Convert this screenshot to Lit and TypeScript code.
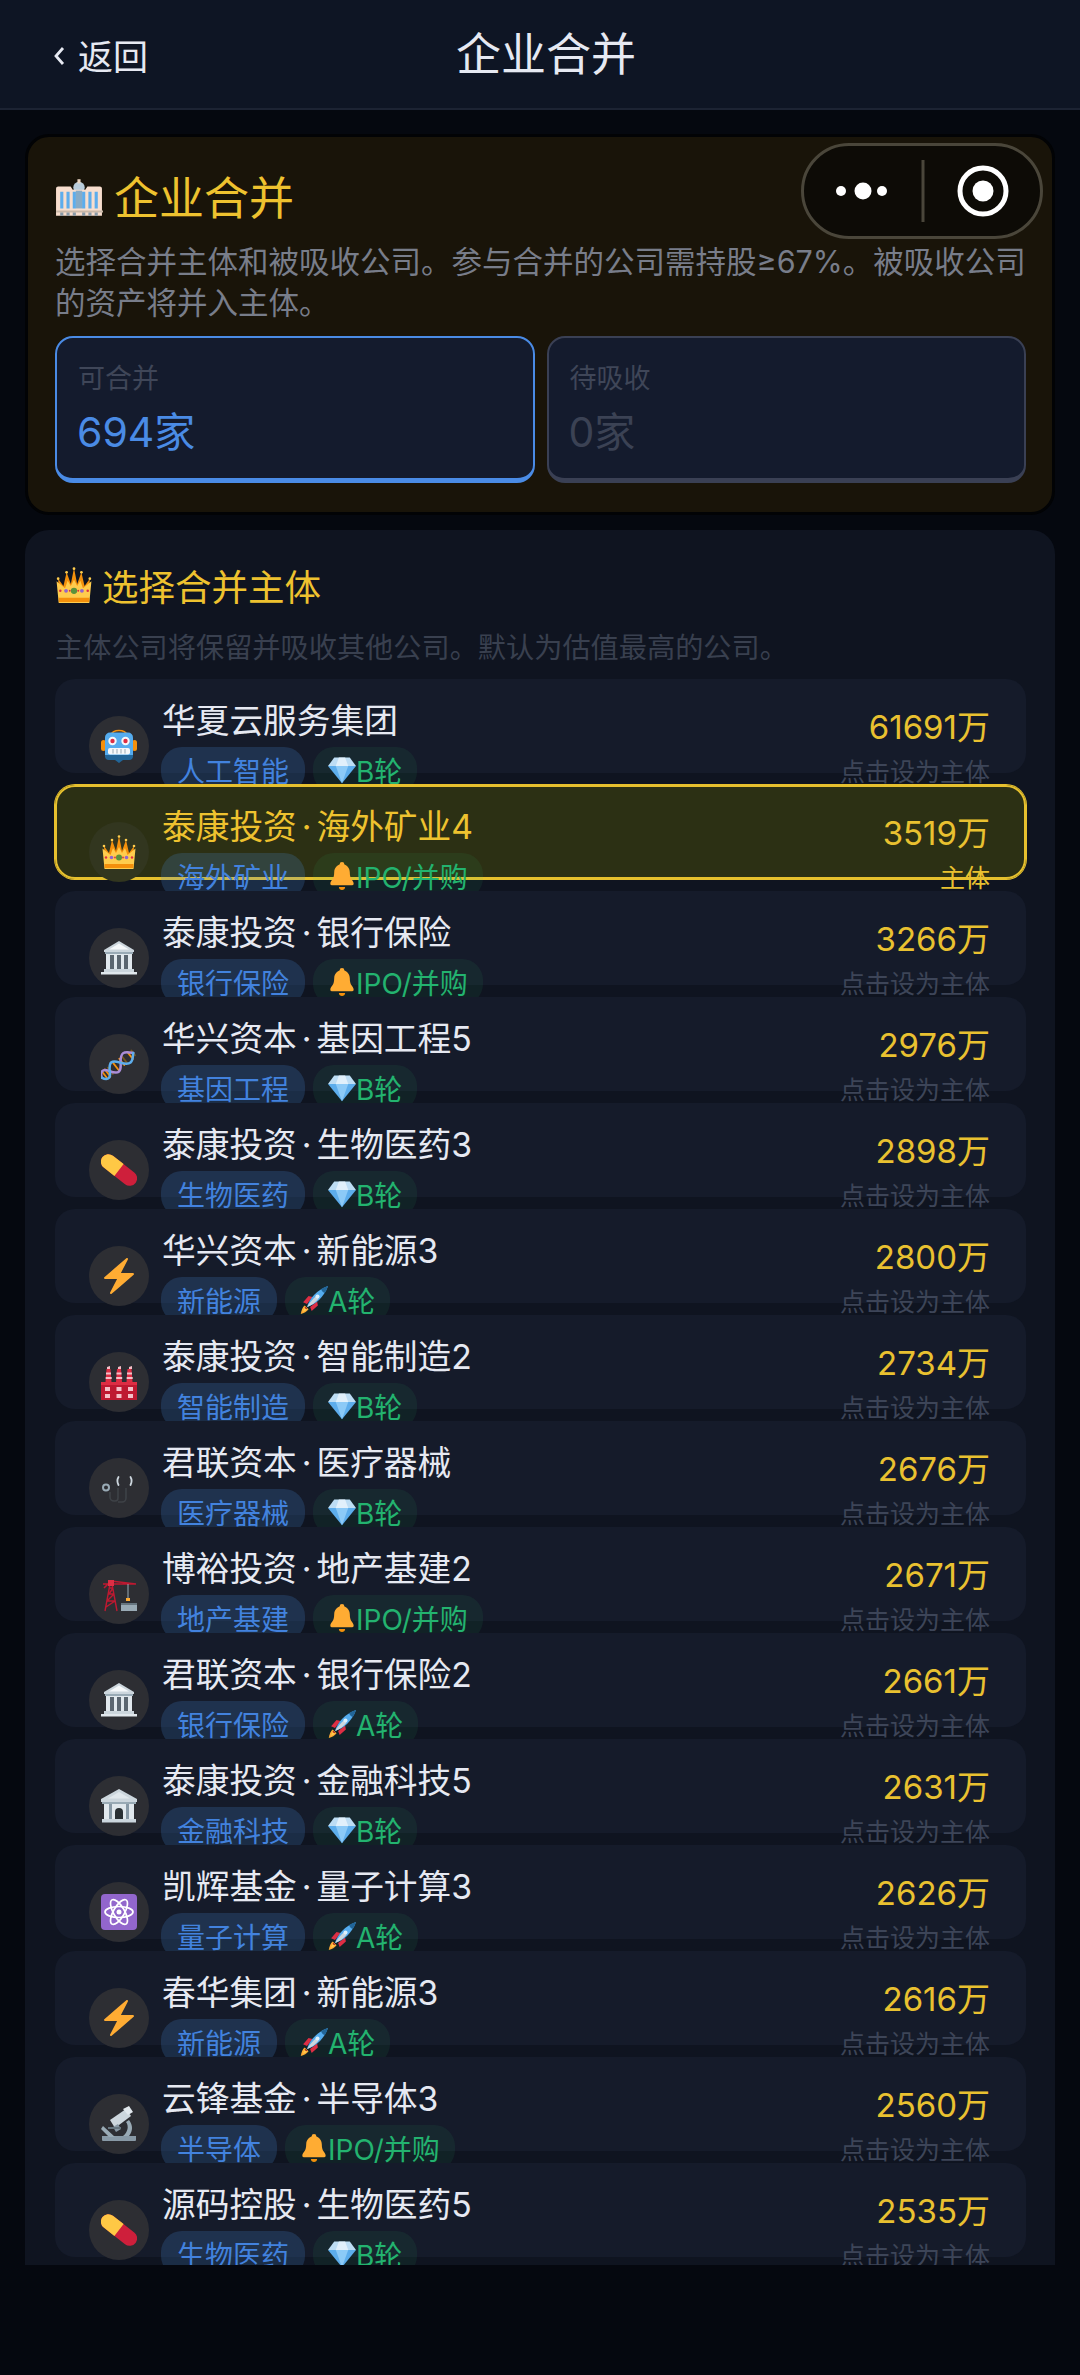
import { LitElement, html, css, svg } from "lit";
import { customElement } from "lit/decorators.js";

const ICONS: Record<string, unknown> = {
  crown: svg`<path fill="#F4900C" d="M3 12l5 7 3-13 4 11 3-15 3 15 4-11 3 13 5-7-1 17H4z"/><path fill="#FFCC4D" d="M1.5 14.5l8 6.5 2.5-7 3 5 3-6 3 6 3-5 2.500 7 8-6.500-2 20.500H3.500z"/><path fill="#F4900C" d="M3.500 30h29l-.2 4h-28.600z"/><circle cx="18" cy="23.500" r="3" fill="#5C913B"/><circle cx="10.500" cy="23.500" r="1.800" fill="#9266CC"/><circle cx="25.500" cy="23.500" r="1.800" fill="#9266CC"/><circle cx="5" cy="23.500" r="1.200" fill="#DD2E44"/><circle cx="31" cy="23.500" r="1.200" fill="#DD2E44"/><circle cx="14" cy="23.500" r=".9" fill="#DD2E44"/><circle cx="22" cy="23.500" r=".9" fill="#DD2E44"/><circle cx="3" cy="12" r="1.300" fill="#FFCC4D"/><circle cx="33" cy="12" r="1.300" fill="#FFCC4D"/><circle cx="18" cy="2.500" r="1.300" fill="#FFCC4D"/><circle cx="11" cy="6" r="1.300" fill="#FFCC4D"/><circle cx="25" cy="6" r="1.300" fill="#FFCC4D"/>`,
  robot: svg`<path fill="none" stroke="#F4900C" stroke-width="1.600" d="M10 7c1-3 4-4.500 8-4.500S25 4 26 7"/><rect x="0" y="12" width="5" height="11" rx="2.500" fill="#F4900C"/><rect x="31" y="12" width="5" height="11" rx="2.500" fill="#F4900C"/><rect x="4" y="4.500" width="28" height="27" rx="5" fill="#55ACEE"/><path fill="#269" d="M4 27h28v1a4 4 0 01-4 4h-6l-4 3-4-3H8a4 4 0 01-4-4z"/><circle cx="11.500" cy="13" r="4.200" fill="#F5F8FA"/><circle cx="24.500" cy="13" r="4.200" fill="#F5F8FA"/><circle cx="11.500" cy="13" r="2.200" fill="#DD2E44"/><circle cx="24.500" cy="13" r="2.200" fill="#DD2E44"/><rect x="7" y="20" width="22" height="6.500" rx="2" fill="#F5F8FA"/><path stroke="#99AAB5" stroke-width="1" d="M12 21v4.500M16 21v4.500M20 21v4.500M24 21v4.500"/>`,
  classical: svg`<path fill="#CCD6DD" d="M18 1L3 10v2h30v-2z"/><path fill="#F5F8FA" d="M18 3.500L8 9.500h20z"/><path fill="#99AAB5" d="M4 12h28v2H4z"/><path fill="#E1E8ED" d="M5 14h26v15H5z"/><path fill="#5B6670" d="M9 15h4v14H9zM16 15h4v14h-4zM23 15h4v14h-4z"/><path fill="#CCD6DD" d="M3 29h30v3H3z"/><path fill="#E1E8ED" d="M0 32h36v2.500H0z"/>`,
  bank: svg`<path fill="#CCD6DD" d="M18 1L0 11v3h36v-3z"/><path fill="#E1E8ED" d="M18 4L7 10.500h22z"/><path fill="#99AAB5" d="M1 14h34v2H1z"/><path fill="#E1E8ED" d="M3 16h30v15H3z"/><path fill="#8899A6" d="M8 16h3v15H8zM25 16h3v15h-3z"/><path fill="#292F33" d="M14 31v-7a4 4 0 018 0v7z"/><path fill="#CCD6DD" d="M1 31h34v3.500H1z"/>`,
  dna: svg`<g transform="rotate(-38 18 18)" fill="none" stroke-linecap="round"><path stroke-width="1.800" stroke="#F4900C" d="M0 15v6M3.500 13.500v9M14 13.500v9M21.500 14v8M32 13.500v9"/><path stroke-width="1.800" stroke="#77581B" d="M7 14v8M25 14v8M36 15v6"/><path stroke="#AA8DD8" stroke-width="2.500" d="M-4 18c2.500-6 6.500-6 9-2s4.500 8 8 8 5.500-4 7-6 5-6 8-6 4.500 2 8 6"/><path stroke="#5DADEC" stroke-width="2.500" d="M-4 18c2.500 6 6.500 6 9 2s4.500-8 8-8 5.500 4 7 6 5 6 8 6 4.500-2 8-6"/></g>`,
  pill: svg`<g transform="rotate(38 18 18)"><rect x="-3" y="10.500" width="42" height="15" rx="7.500" fill="#CE1F3B"/><path fill="#FFC845" d="M18 10.500H4.500a7.500 7.500 0 000 15H18z"/></g>`,
  bolt: svg`<path fill="#FFAC33" d="M32.938 15.651C32.792 15.26 32.418 15 32 15H19.925L26.89 1.458c.219-.426.106-.947-.271-1.243C26.437.071 26.218 0 26 0c-.233 0-.466.082-.653.243L18 6.588 3.347 19.243c-.316.273-.43.714-.284 1.105S3.582 21 4 21h12.075L9.110 34.542c-.219.426-.106.947.271 1.243.182.144.401.215.619.215.233 0 .466-.082.653-.243L18 29.412l14.653-12.655c.317-.273.43-.714.285-1.106z"/>`,
  factory: svg`<path fill="#BE1931" d="M0 20h36v16H0z"/><path fill="#DD2E44" d="M0 18h36v3H0z"/><path fill="#F5C0C8" d="M6 3l3-1v3H6zM17 3l3-1v3h-3zM28 3l3-1v3h-3z"/><path fill="#DD2E44" d="M5.500 5h4l1 13h-6zM16 5h4l1 13h-6zM26.500 5h4l1 13h-6z"/><path fill="#F5C0C8" d="M5 8.500h5v2H5zM4.700 13h6v2h-6zM15.500 8.500h5v2h-5zM15.200 13h6v2h-6zM26 8.500h5v2h-5zM25.700 13h6v2h-6z"/><path fill="#F5C0C8" d="M4 23h5v4H4zM15.500 23h5v4h-5zM27 23h5v4h-5zM4 30h5v4H4zM15.500 30h5v4h-5zM27 30h5v4h-5z"/>`,
  stethoscope: svg`<circle cx="5" cy="17.500" r="3" fill="none" stroke="#99AAB5" stroke-width="2"/><path fill="none" stroke="#3E4247" stroke-width="1.600" d="M17 18v10a3 3 0 01-3 3h-1a4 4 0 01-4-4v-5M25 18v10a4 4 0 01-4 4h-4"/><path fill="none" stroke="#CCD6DD" stroke-width="1.800" stroke-linecap="round" d="M17.500 7c-1.500 2.500-1.500 5 0 8M29.500 7c1.500 2.500 1.500 5 0 8"/>`,
  crane: svg`<path fill="none" stroke="#BE1931" stroke-width="1.400" d="M9 8L4 35M11 8l5 27M6 25h8M7 18h6M8 12h4M5 31l9-6M6 25l7-7M12 12l-4 6"/><path fill="none" stroke="#BE1931" stroke-width="1.600" d="M2 8h33M3 12l7-7 25 3"/><path fill="#DD2E44" d="M7 4h6v6H7z"/><path stroke="#99AAB5" stroke-width="1" d="M27 8v16"/><path fill="#FFAC33" d="M25 22h4v3h-4z"/><path fill="#99AAB5" d="M20 27h16v8H20z"/><path fill="#66757F" d="M20 27h16v2H20z"/>`,
  atom: svg`<rect width="36" height="36" rx="4" fill="#9266CC"/><g fill="none" stroke="#fff" stroke-width="1.700"><ellipse cx="18" cy="18" rx="14" ry="5.500"/><ellipse cx="18" cy="18" rx="14" ry="5.500" transform="rotate(60 18 18)"/><ellipse cx="18" cy="18" rx="14" ry="5.500" transform="rotate(120 18 18)"/></g><circle cx="18" cy="18" r="2.500" fill="#fff"/>`,
  microscope: svg`<path fill="#8899A6" d="M1 30h34v4a1 1 0 01-1 1H2a1 1 0 01-1-1z"/><path fill="#99AAB5" d="M2 20l12 11h-6L0 23zM28 14c4 5 4 11 0 16h-6c5-4 6-10 3-14z"/><path fill="#CCD6DD" d="M9 14L25 3l5 7-16 12z"/><path fill="#E1E8ED" d="M22 3l6-3 4 6-5 3z"/><path fill="#8899A6" d="M12 21l5-3 3 5-5 3z"/><path fill="#66757F" d="M7 21h13v2H7z"/>`,
  gem: svg`<path fill="#BDDDF4" d="M8 2h20l8 11H0z"/><path fill="#5DADEC" d="M0 13h36L18 35z"/><path fill="#8CCAF7" d="M10 13h16L18 35z"/><path fill="#E1F0FB" d="M10 13L14 2h8l4 11z"/>`,
  bell: svg`<path fill="#FFAC33" d="M28 13c0 11 5 10 5 15 0 0 0 2-2 2H5c-2 0-2-2-2-2 0-5 5-4 5-15C8 7.478 12.477 3 18 3s10 4.478 10 10z"/><circle cx="18" cy="3" r="3" fill="#FFAC33"/><path fill="#F4900C" d="M18 36c2.209 0 4-1.791 4-4h-8c0 2.209 1.791 4 4 4z"/>`,
  rocket: svg`<path fill="#FFAC33" d="M1 36c1-5 2-9 5-11l5 5c-2 3-6 5-10 6z"/><path fill="#FFCC4D" d="M4 33c.500-2 1-4 3-5l2 2c-1 2-3 2.500-5 3z"/><path fill="#DD2E44" d="M4 21l7-8 5 1-7 9zM15 32l8-7-1-5-9 7z"/><path fill="#A0041E" d="M7 27l2 2-1 1-2-2z"/><path fill="#55ACEE" d="M9 27C12 16 22 5 36 0c-5 14-16 24-27 27z"/><path fill="#CCD6DD" d="M9 27c3-5 7-10 12-14 1 2 2 3 3 3-4 5-9 9-15 11z"/><path fill="#269" d="M36 0c-4 1-7 3-9 4 1 3 3 5 5 5 2-3 3-6 4-9z"/><circle cx="22.500" cy="13.500" r="2.600" fill="#DCF0FC"/>`,
  tower: svg`<circle cx="23" cy="8" r="5.500" fill="#B9CDDB"/><path fill="#E8D4C0" d="M21.500 0h3v4h-3z"/><path fill="#F7DECE" d="M1 9a2 2 0 012-2h12l2 3h12l2-3h12a2 2 0 012 2v26H1z"/><path fill="#5DADEC" d="M5 12h3v16H5zM11 12h3v16h-3zM17 12h3v16h-3zM26 12h3v16h-3zM32 12h3v16h-3zM38 12h3v16h-3z"/><path fill="#3B88C3" d="M20 11h6v17h-6z" opacity=".6"/><path fill="#C9B8A8" d="M1 30h45v2H1z"/><path fill="#8899A6" d="M5 32h3v3H5zM11 32h3v3h-3zM17 32h3v3h-3zM26 32h3v3h-3zM32 32h3v3h-3zM38 32h3v3h-3z"/>`,
};

const icon = (name: string, cls: string, box = "0 0 36 36") =>
  html`<svg class=${cls} viewBox=${box} aria-hidden="true">${ICONS[name]}</svg>`;

type Round = "A" | "B" | "I";
const ROUND: Record<Round, [string, string]> = {
  A: ["rocket", "A轮"],
  B: ["gem", "B轮"],
  I: ["bell", "IPO/并购"],
};

const ROWS: [string, string, Round, string, string][] = [
  ["华夏云服务集团", "人工智能", "B", "61691万", "robot"],
  ["泰康投资·海外矿业4", "海外矿业", "I", "3519万", "crown"],
  ["泰康投资·银行保险", "银行保险", "I", "3266万", "classical"],
  ["华兴资本·基因工程5", "基因工程", "B", "2976万", "dna"],
  ["泰康投资·生物医药3", "生物医药", "B", "2898万", "pill"],
  ["华兴资本·新能源3", "新能源", "A", "2800万", "bolt"],
  ["泰康投资·智能制造2", "智能制造", "B", "2734万", "factory"],
  ["君联资本·医疗器械", "医疗器械", "B", "2676万", "stethoscope"],
  ["博裕投资·地产基建2", "地产基建", "I", "2671万", "crane"],
  ["君联资本·银行保险2", "银行保险", "A", "2661万", "classical"],
  ["泰康投资·金融科技5", "金融科技", "B", "2631万", "bank"],
  ["凯辉基金·量子计算3", "量子计算", "A", "2626万", "atom"],
  ["春华集团·新能源3", "新能源", "A", "2616万", "bolt"],
  ["云锋基金·半导体3", "半导体", "I", "2560万", "microscope"],
  ["源码控股·生物医药5", "生物医药", "B", "2535万", "pill"],
];

@customElement("app-root")
export class AppRoot extends LitElement {
  static styles = css`
    :host {
      display: block;
      width: 1080px;
      height: 2375px;
      overflow: hidden;
      background: #05080f;
      font-family: Inter, "Noto Sans CJK SC", sans-serif;
      color: #e6e9f2;
    }
    .nav {
      box-sizing: border-box;
      height: 110px;
      padding: 0 40px 0 52px;
      display: grid;
      grid-template-columns: 1fr auto 1fr;
      align-items: center;
      background: #0e1524;
      border-bottom: 2px solid #1c2333;
    }
    .back { display: flex; align-items: center; gap: 12px; font-size: 35px; }
    .chev { width: 14px; height: 22px; margin-top: 4px; fill: none; stroke: #e6e9f2; stroke-width: 2.800; }
    .nav-title { font-size: 45px; line-height: 60px; margin-top: 2px; }
    .scroll {
      height: 2155px;
      overflow: hidden;
      padding: 24px 25px 0;
      box-sizing: border-box;
    }
    .hero {
      position: relative;
      box-sizing: border-box;
      height: 381px;
      border: 3px solid #020305;
      border-radius: 24px;
      background: #191409;
      padding: 28px 26px 0 27px;
    }
    .capsule {
      position: absolute;
      top: 6px;
      right: 9px;
      box-sizing: border-box;
      width: 242px;
      height: 96px;
      border: 3px solid #4a463a;
      border-radius: 48px;
      background: #0d0b06;
      display: flex;
      align-items: center;
    }
    .cap-svg { display: block; width: 236px; height: 90px; }
    .hero-title { display: flex; align-items: center; gap: 11px; height: 60px; font-size: 45px; color: #eec22f; }
    .ic-tower { width: 48px; height: 40px; flex: none; margin-top: 6px; }
    .desc { margin: 16px 0 0; font-size: 30.500px; line-height: 41px; color: #787d8a; }
    .stats { display: grid; grid-template-columns: 1fr 1fr; gap: 12px; margin-top: 13px; }
    .stat {
      box-sizing: border-box;
      height: 147px;
      padding: 22px 21px 0;
      border: 2px solid #3a4054;
      border-bottom-width: 5px;
      border-radius: 18px;
      background: #141b2d;
      color: #3b4254;
    }
    .stat.on { border-color: #4a8be5; color: #4a8be5; }
    .stat-label { font-size: 27px; line-height: 38px; color: #3f4658; }
    .stat-value { margin: 6px 0 0 -1px; font-size: 41px; line-height: 56px; }
    .panel {
      margin-top: 15px;
      padding: 30px 29px 0 30px;
      background: #0f1420;
      border-radius: 24px 24px 0 0;
      height: 1900px;
      box-sizing: border-box;
    }
    .panel-title { display: flex; align-items: center; gap: 9px; height: 50px; font-size: 36.500px; color: #eec22f; }
    .ic-title { width: 38px; height: 38px; flex: none; }
    .panel-sub { margin-top: 18px; font-size: 28.200px; line-height: 40px; color: #39404f; }
    .rows { display: flex; flex-direction: column; gap: 12px; margin-top: 11px; }
    .row {
      isolation: isolate;
      box-sizing: border-box;
      height: 94px;
      padding: 20px 36px 0 34px;
      border-radius: 20px;
      background: #151b2a;
    }
    .row.sel { background: #2c3014; box-shadow: 0 0 0 1px #e6c02e, inset 0 0 0 2px #e6c02e; }
    .inner { display: flex; align-items: center; height: 94px; }
    .avatar {
      width: 60px;
      height: 60px;
      flex: none;
      border-radius: 50%;
      background: #2d2e33;
      display: flex;
      align-items: center;
      justify-content: center;
    }
    .sel .avatar { background: #32361f; }
    .ic-av { width: 36px; height: 36px; }
    .info { flex: 1; margin-left: 12px; min-width: 0; }
    .name { height: 48px; padding-left: 1px; font-size: 33.700px; line-height: 43px; white-space: nowrap; }
    .dot { padding: 0 5px; }
    .sel .name { color: #eec22f; }
    .tags { display: flex; gap: 8px; }
    .tag {
      box-sizing: border-box;
      height: 46px;
      padding: 0 16px;
      border-radius: 21px;
      display: flex;
      align-items: center;
      font-size: 28px;
      white-space: nowrap;
    }
    .tag.blue { background: rgba(74, 144, 226, 0.2); color: #4282de; }
    .tag.green { padding: 0 15px; background: rgba(46, 204, 113, 0.08); color: #23b36f; }
    .ic-tag { width: 28px; height: 28px; flex: none; }
    .side { text-align: right; white-space: nowrap; align-self: flex-start; }
    .val { font-size: 33px; line-height: 56px; color: #e9c130; }
    .hint { font-size: 25px; line-height: 34px; color: #3d4558; }
    .sel .hint { color: #e9c130; }
  `;

  render() {
    return html`
      <div class="nav">
        <div class="back">
          <svg class="chev" viewBox="0 0 14 22"><path d="M11 3L4 11l7 8" /></svg><span>返回</span>
        </div>
        <div class="nav-title">企业合并</div>
        <div></div>
      </div>
      <div class="scroll">
        <section class="hero">
          <div class="hero-title">${icon("tower", "ic-tower", "0 0 46 36")}<span>企业合并</span></div>
          <p class="desc">选择合并主体和被吸收公司。参与合并的公司需持股≥67%。被吸收公司的资产将并入主体。</p>
          <div class="stats">
            <div class="stat on"><div class="stat-label">可合并</div><div class="stat-value">694家</div></div>
            <div class="stat"><div class="stat-label">待吸收</div><div class="stat-value">0家</div></div>
          </div>
          <div class="capsule">
            <svg class="cap-svg" viewBox="0 0 236 90">
              <circle cx="37" cy="45" r="5" fill="#fff" />
              <circle cx="59" cy="45" r="8.500" fill="#fff" />
              <circle cx="78" cy="45" r="5" fill="#fff" />
              <path d="M119 14v62" stroke="#4a463a" stroke-width="3" />
              <circle cx="179" cy="45" r="23" fill="none" stroke="#fff" stroke-width="5" />
              <circle cx="179" cy="45" r="10.500" fill="#fff" />
            </svg>
          </div>
        </section>
        <section class="panel">
          <div class="panel-title">${icon("crown", "ic-title")}<span>选择合并主体</span></div>
          <div class="panel-sub">主体公司将保留并吸收其他公司。默认为估值最高的公司。</div>
          <div class="rows">
            ${ROWS.map(([name, sector, round, val, ic]) => {
              const sel = ic === "crown";
              const [rIcon, rText] = ROUND[round];
              const parts = name.split("·");
              return html`
                <div class="row ${sel ? "sel" : ""}">
                  <div class="inner">
                    <div class="avatar">${icon(ic, "ic-av")}</div>
                    <div class="info">
                      <div class="name">${parts[0]}${parts[1] ? html`<span class="dot">·</span>${parts[1]}` : ""}</div>
                      <div class="tags">
                        <div class="tag blue">${sector}</div>
                        <div class="tag green">${icon(rIcon, "ic-tag")}${rText}</div>
                      </div>
                    </div>
                    <div class="side">
                      <div class="val">${val}</div>
                      <div class="hint">${sel ? "主体" : "点击设为主体"}</div>
                    </div>
                  </div>
                </div>
              `;
            })}
          </div>
        </section>
      </div>
    `;
  }
}
